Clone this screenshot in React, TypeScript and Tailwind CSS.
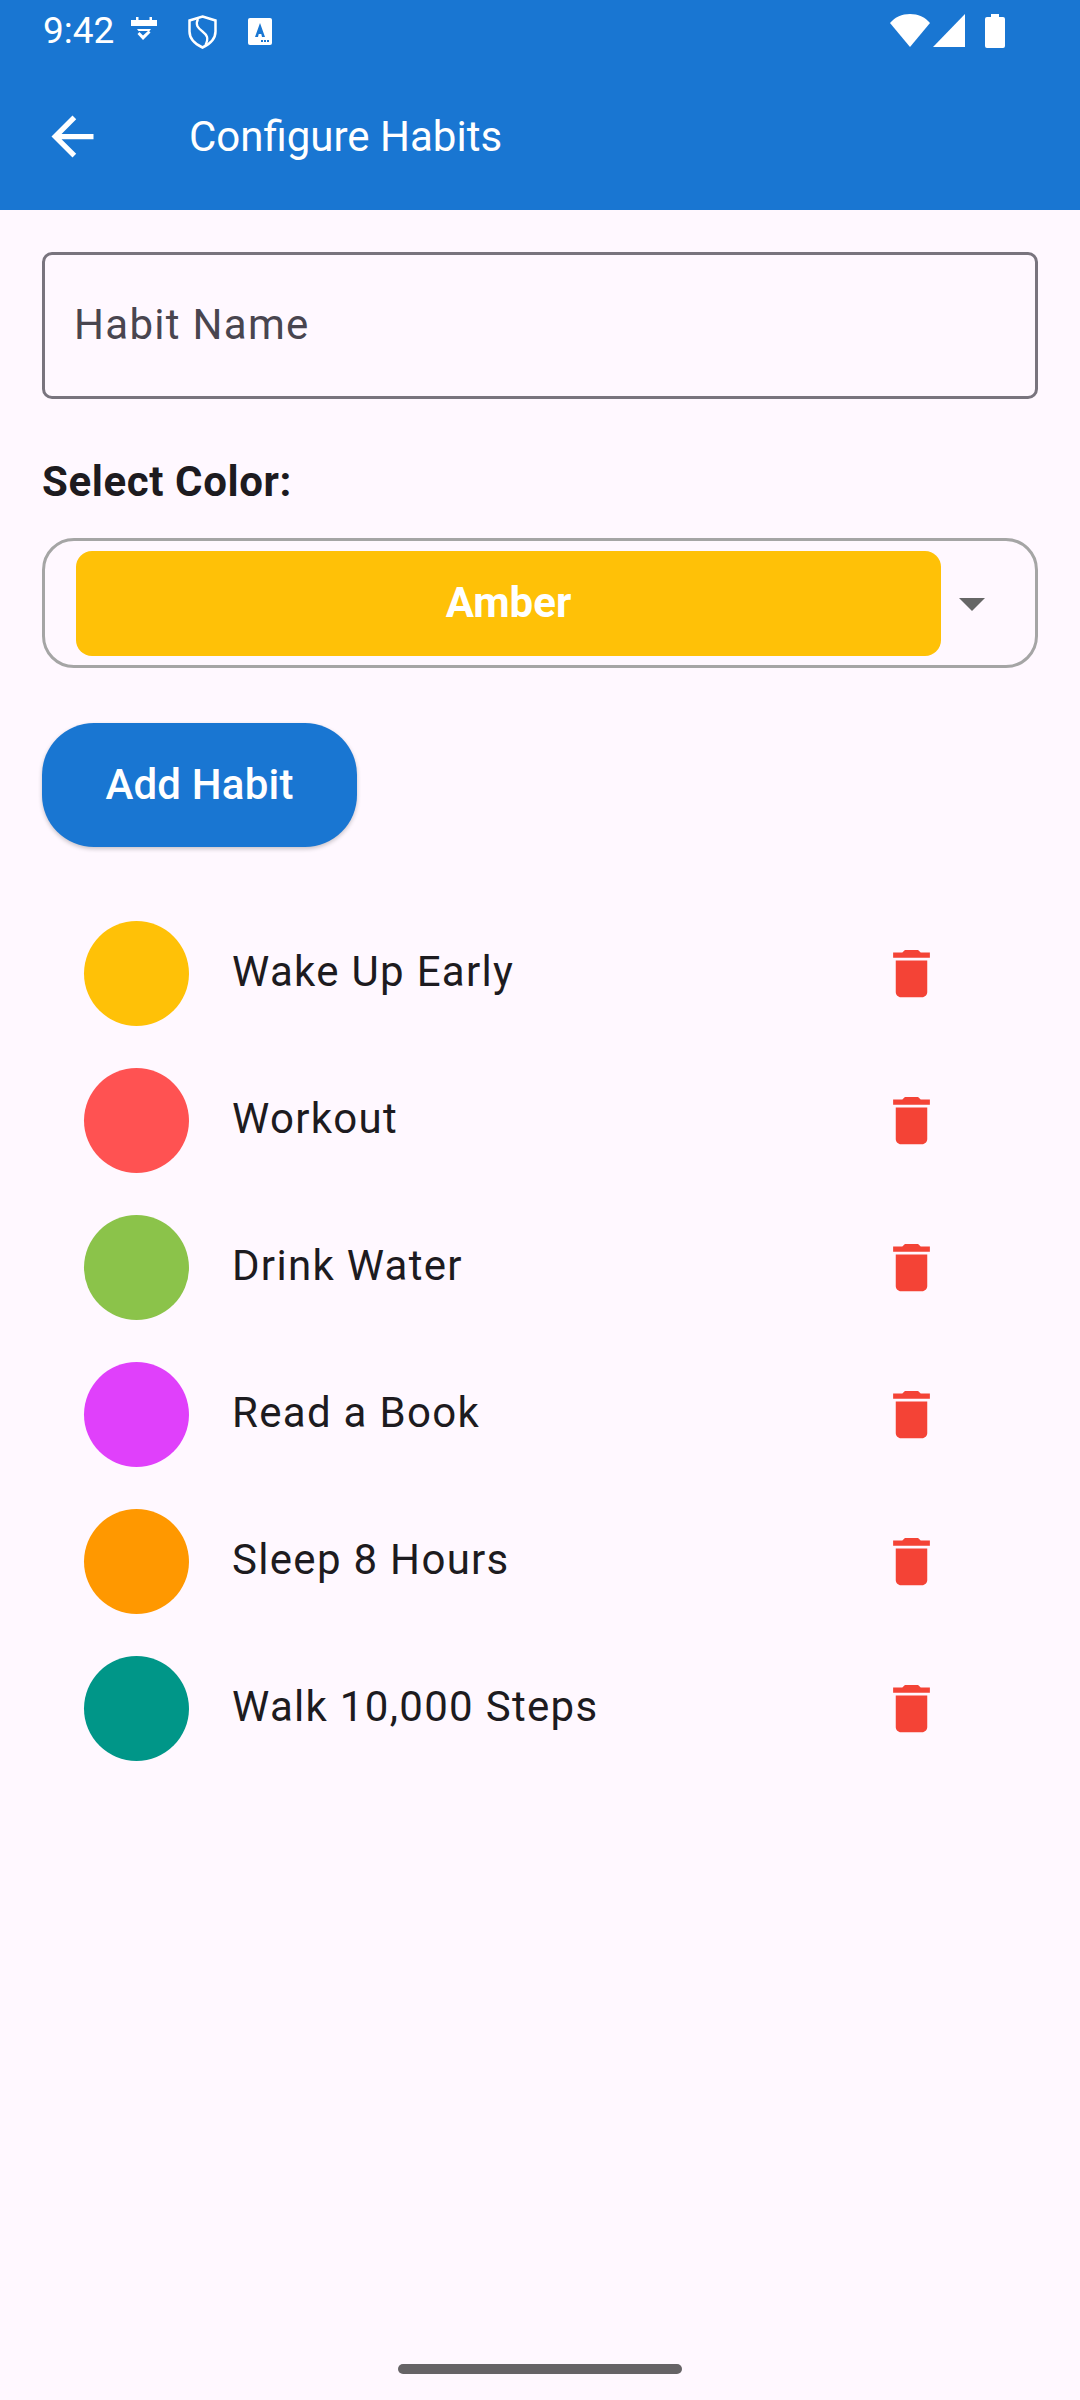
const habits = [
  { name: 'Wake Up Early', color: 'bg-[#FFC107]' },
  { name: 'Workout', color: 'bg-[#FF5252]' },
  { name: 'Drink Water', color: 'bg-[#8BC34A]' },
  { name: 'Read a Book', color: 'bg-[#E040FB]' },
  { name: 'Sleep 8 Hours', color: 'bg-[#FF9800]' },
  { name: 'Walk 10,000 Steps', color: 'bg-[#009688]' },
];

function StatusBar() {
  return (
    <div className="flex h-[63px] items-start justify-between pl-[43px] pr-[75px] pt-[13px] text-white">
      <div className="flex items-start">
        <span className="w-[70px] text-[37px] leading-[36px]">9:42</span>
        <svg className="ml-[18px] mt-[4px] h-[23px] w-[26px]" viewBox="0 0 26 23" fill="white">
          <path d="M0 3h26v6H0zM5 0h2.500v3H5zM18.500 0H21v3h-2.500z" />
          <path d="M6 12h14l-1.500 2h-11z" />
          <path d="M6.500 17l2-2 3.500 3.500 5.500-5 2 2-7.500 7.500z" />
        </svg>
        <svg className="ml-[31px] mt-[2px] h-[34px] w-[29px]" viewBox="0 0 29 34" fill="none" stroke="white">
          <path d="M14.500 1.500l13 4v11c0 7.500-5.500 12.500-13 16C7 29 1.500 24 1.500 16.500v-11z" strokeWidth="2.500" />
          <path d="M10 4c-3 6 0 9 4.500 12.500S21 23 17.500 30" strokeWidth="2.300" />
        </svg>
        <svg className="ml-[31px] mt-[5px] h-[27px] w-[24px]" viewBox="0 0 24 27">
          <rect width="24" height="27" rx="2" fill="white" />
          <path d="M12 5l5 14h-3l-.7-3h-2.600l-.7 3H7z" fill="#1976D2" />
          <path d="M13 22h2v2h-2zM16 22h2v2h-2zM19 22h2v2h-2z" fill="#1976D2" />
        </svg>
      </div>
      <div className="flex items-start">
        <svg className="mt-[1px] h-[33px] w-[40px]" viewBox="0 0 40 33" fill="white">
          <path d="M0 9C5 3 12 0 20 0s15 3 20 9L20 33z" />
        </svg>
        <svg className="ml-[3px] mt-[1px] h-[33px] w-[33px]" viewBox="0 0 33 33" fill="white">
          <path d="M32 0v33H0z" />
        </svg>
        <svg className="ml-[19px] mt-[1px] h-[34px] w-[20px]" viewBox="0 0 20 34" fill="white">
          <path d="M6 0h8v3h4a2 2 0 0 1 2 2v27a2 2 0 0 1-2 2H2a2 2 0 0 1-2-2V5a2 2 0 0 1 2-2h4z" />
        </svg>
      </div>
    </div>
  );
}

export default function App() {
  return (
    <div className="flex h-[2400px] w-[1080px] flex-col overflow-hidden bg-[#FFF8FF] font-['Roboto',sans-serif]">
      <header className="h-[210px] bg-[#1976D2]">
        <StatusBar />
        <div className="flex h-[147px] items-center pl-[41px]">
          <svg className="h-[63px] w-[63px]" viewBox="0 0 24 24" fill="white">
            <path d="M20 11H7.830l5.590-5.590L12 4l-8 8 8 8 1.410-1.410L7.830 13H20v-2z" />
          </svg>
          <h1 className="ml-[85px] text-[42px] font-normal leading-[50px] text-white">Configure Habits</h1>
        </div>
      </header>

      <main className="flex flex-1 flex-col px-[42px] pt-[42px]">
        <input
          readOnly
          placeholder="Habit Name"
          className="h-[147px] w-full rounded-[10px] border-[3px] border-[#79747E] bg-transparent px-[29px] pb-[2px] text-[42px] tracking-[1.3px] outline-none placeholder:text-[#49454F]"
        />

        <p className="mt-[59px] text-[42px] font-bold leading-[48px] tracking-[0.6px] text-[#1D1B20]">Select Color:</p>

        <div className="mt-[32px] flex h-[130px] items-center rounded-[32px] border-[3px] border-[#A5A5A5] pl-[31px]">
          <div className="flex h-[105px] w-[865px] items-center justify-center rounded-[16px] bg-[#FFC107] pb-[2px] text-[42px] font-bold text-white">
            Amber
          </div>
          <svg className="ml-[18px] mt-[2px] h-[13px] w-[26px]" viewBox="0 0 26 13" fill="#666666">
            <path d="M0 0h26L13 13z" />
          </svg>
        </div>

        <button className="mt-[55px] h-[124px] w-[315px] rounded-[52px] bg-[#1976D2] pb-[2px] text-[42px] font-medium tracking-[0.2px] text-white shadow-[0_2px_4px_rgba(0,0,0,0.22)]">
          Add Habit
        </button>

        <ul className="mt-[53px] flex flex-col">
          {habits.map((habit) => (
            <li key={habit.name} className="flex h-[147px] items-center pl-[42px] pr-[95px]">
              <div className={`h-[105px] w-[105px] shrink-0 rounded-full ${habit.color}`} />
              <span className="ml-[43px] flex-1 pb-[3px] text-[42px] leading-[50px] tracking-[1.3px] text-[#1D1B20]">{habit.name}</span>
              <svg className="h-[63px] w-[63px]" viewBox="0 0 24 24" fill="#F44336">
                <path d="M6 19c0 1.100.9 2 2 2h8c1.100 0 2-.9 2-2V7H6v12zM19 4h-3.500l-1-1h-5l-1 1H5v2h14V4z" />
              </svg>
            </li>
          ))}
        </ul>

        <div className="mx-auto mb-[26px] mt-auto h-[10px] w-[284px] rounded-full bg-[#666366]" />
      </main>
    </div>
  );
}
